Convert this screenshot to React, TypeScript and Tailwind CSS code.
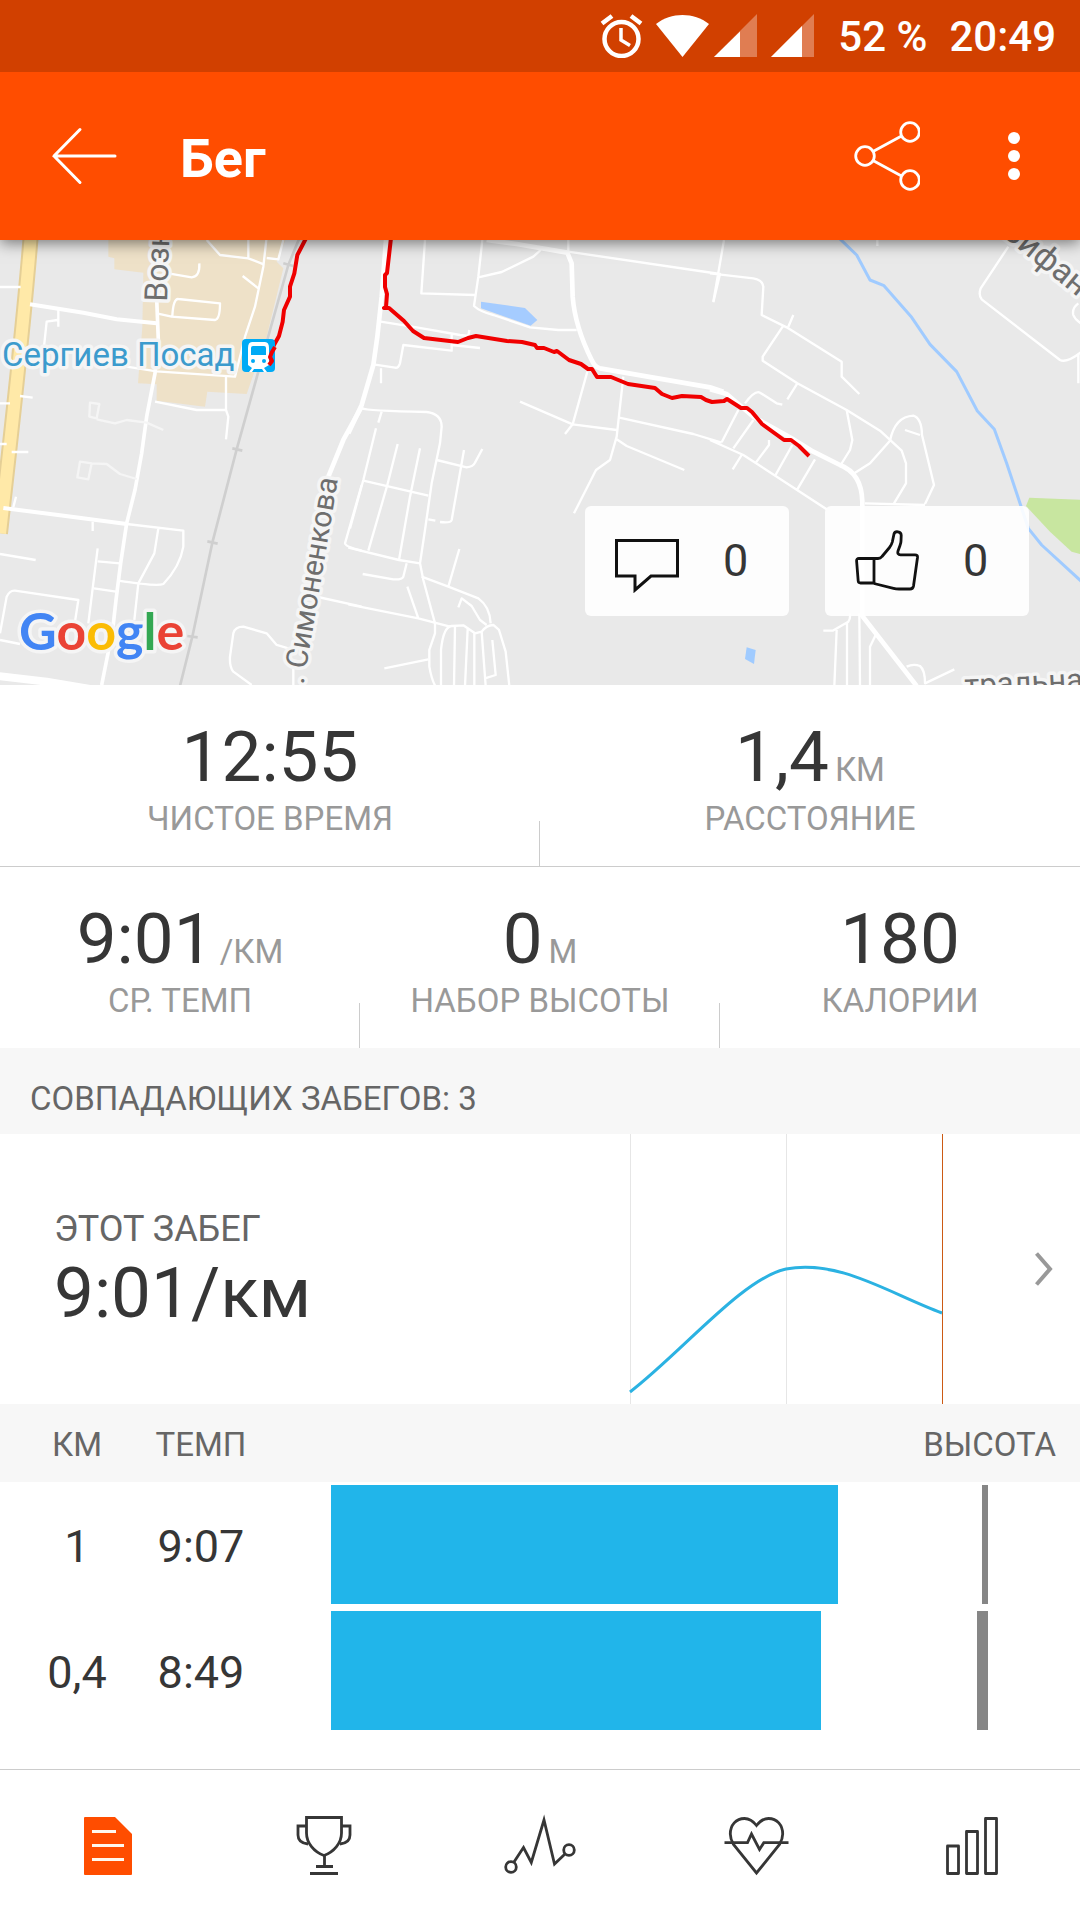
import React from "react";

type StatProps = { value: string; unit?: string; label: string; last?: boolean };

function Stat({ value, unit, label, last }: StatProps) {
  return (
    <div className="relative flex flex-1 flex-col items-center pt-[30px] pb-[27px]">
      <div className="flex items-baseline gap-1.5">
        <span className="text-[71px] leading-[84px] text-[#363636]">{value}</span>
        {unit && <span className="text-[33px] leading-10 text-[#999]">{unit}</span>}
      </div>
      <span className="text-[33px] leading-10 text-[#999]">{label}</span>
      {!last && <span className="absolute right-0 bottom-0 h-[45px] w-px bg-[#ccc]" />}
    </div>
  );
}

function StatusBar() {
  return (
    <div className="relative z-20 flex h-[72px] items-center justify-end bg-[#d14000] pr-6 text-[42px] font-medium text-white">
      <svg width="44" height="44" viewBox="0 0 44 44" fill="none" stroke="#fff" className="mr-3" aria-hidden="true">
        <circle cx="21.5" cy="25" r="17" strokeWidth="4.5" />
        <path d="M2 9.500L12 2M41 9.500L31 2" strokeWidth="4.500" />
        <path d="M21 14V26L30 31.500" strokeWidth="3.500" />
      </svg>
      <svg width="53" height="44" viewBox="0 0 53 44" className="mr-[5px]" fill="#fff" aria-hidden="true">
        <path d="M0 10C15-2 38-2 53 10L26.500 43Z" />
      </svg>
      <svg width="43" height="44" viewBox="0 0 43 44" className="mr-[14px]" fill="#fff" aria-hidden="true">
        <path d="M0 43L43 0V43Z" opacity=".32" />
        <path d="M0 43L26 17.500V43Z" />
      </svg>
      <svg width="43" height="44" viewBox="0 0 43 44" className="mr-6" fill="#fff" aria-hidden="true">
        <path d="M0 43L43 0V43Z" opacity=".32" />
        <path d="M0 43L31 12V43Z" />
      </svg>
      <span className="mr-[22px]">52 %</span>
      <span>20:49</span>
    </div>
  );
}

function Header() {
  return (
    <header className="relative z-10 flex h-[168px] items-center bg-[#ff4d00] pr-[54px] pl-12 text-white shadow-[0_3px_14px_rgba(0,0,0,0.5)]">
      <button aria-label="Назад">
        <svg width="72" height="60" viewBox="0 0 72 60" fill="none" stroke="#fff" strokeWidth="3" strokeLinecap="round">
          <path d="M67 30H6M32 3.500L6 30L32 56.500" />
        </svg>
      </button>
      <h1 className="ml-[60px] flex-1 pt-1 text-[54px] font-bold">Бег</h1>
      <button aria-label="Поделиться">
        <svg width="72" height="72" viewBox="0 0 72 72" fill="none" stroke="#fff" strokeWidth="2.800">
          <circle cx="17" cy="36" r="9.300" />
          <circle cx="62" cy="12" r="9.300" />
          <circle cx="62" cy="60" r="9.300" />
          <path d="M25 31.500L53.500 16M25 40.500L53.500 56" />
        </svg>
      </button>
      <button aria-label="Ещё" className="ml-[82px]">
        <svg width="24" height="60" viewBox="0 0 24 60" fill="#fff">
          <circle cx="12" cy="12" r="6" />
          <circle cx="12" cy="30" r="6" />
          <circle cx="12" cy="48" r="6" />
        </svg>
      </button>
    </header>
  );
}

const halo = { stroke: "#f5f5f5", strokeWidth: 7, strokeLinejoin: "round" as const, paintOrder: "stroke" };

function RouteMap() {
  return (
    <svg
      viewBox="0 0 1080 445"
      preserveAspectRatio="xMidYMid slice"
      className="block h-[445px] w-full bg-[#e9e9e9]"
      fontFamily="Roboto, sans-serif"
      fill="none"
      strokeLinejoin="round"
    >
      {/* western sheet: town centre and railway */}
      <g transform="translate(0 -10) scale(.33333)">
        <path
          d="M325 20V80L343 85V118L430 128L427 290L414 460L470 463L470 512L615 530L622 485L740 492L765 420L800 320L850 115L830 95L860 20Z"
          fill="#eee1c8"
        />
        <path d="M92 20C70 300 30 640 0 910" stroke="#e5cf96" strokeWidth="48" />
        <path d="M92 20C70 300 30 640 0 910" stroke="#ffe9a8" strokeWidth="36" />
        <g stroke="#fff" strokeWidth="12">
          <path d="M90 223L250 248L350 268L470 280M10 834L180 856L380 882" />
          <path d="M470 205L475 330L465 430L440 560L425 670L405 780L380 880L362 1000L348 1110L338 1200L305 1365" strokeWidth="11" />
          <path d="M1085 530L1030 630L985 740" strokeWidth="14" />
          <path d="M-5 1338L140 1355L300 1382" strokeWidth="24" />
        </g>
        <g stroke="#fff" strokeWidth="7">
          <path d="M0 171H62M0 520H30M60 498L98 503M35 666H85M0 642H20" />
          <path d="M800 20L790 110L765 230L735 320L705 440L470 424L380 410M620 30L660 75L745 85L793 104M745 30V85M800 84L835 88L850 30M728 138L775 175" />
          <path d="M505 130L575 142Q600 140 598 100M470 250L515 260L645 270Q660 268 660 220L535 207Q520 205 517 258" />
          <path d="M175 240V290M172 270L140 275L132 350" />
          <path d="M465 515L590 540H678V440M678 540L685 560L678 628" />
          <path d="M270 518L298 522L290 565L268 560ZM290 568L345 580L380 570L440 578L490 600M240 695L275 700L265 748L232 742ZM275 700L320 702L360 732L410 747" stroke="#f5f5f5" />
          <path d="M0 972L107 990M380 882L550 902V950Q540 1010 490 1062Q470 1070 355 1052M475 895L463 970L415 1060L403 1170M278 875V903M293 955L265 1180M293 994L360 1000M282 1075L348 1085" />
          <path d="M0 1210L20 1100Q30 1080 45 1082L235 1110L225 1175M0 1230L60 1242" />
          <path d="M1085 765L1035 940Q1035 950 1085 962M940 1098L1085 1130M865 1255L830 1245L800 1210L730 1190Q705 1190 700 1210L690 1280Q688 1310 700 1325L755 1365M880 1300V1370" />
          <path d="M48 800L40 832" />
        </g>
        <g stroke="#cfcfcf" strokeWidth="8">
          <path d="M900 20L865 105L775 425L710 658L637 938L577 1220L540 1368" />
          <path d="M850 100L880 108M697 655L727 662M622 934L653 941M562 1218L593 1222" />
        </g>
        <path d="M918 25L892 75L883 130L870 170V200L852 240L848 275L837 318L822 345L812 370L818 385L808 402" stroke="#f00000" strokeWidth="12" />
      </g>

      {/* central sheet */}
      <g transform="translate(350 -10) scale(.33333)">
        <g stroke="#fff" strokeWidth="14">
          <path d="M108 30L95 200L82 320L70 405L35 525L-5 610" />
          <path d="M410 30L500 42L652 68L665 100L668 200Q675 290 725 390Q735 412 750 415L1080 472L1120 485" />
        </g>
        <g stroke="#fff" strokeWidth="7">
          <path d="M225 30L214 190L375 195M397 30L385 140L372 228Q390 245 430 255L540 292L625 300H680M385 142L455 126L550 80L572 60M655 30V65L1110 132L1090 217" />
          <path d="M92 275L200 292L330 315L355 318L358 300M305 310V362L160 345L150 400Q145 415 135 413L70 403M93 415V460M305 345L390 354" />
          <path d="M510 515L668 583L800 600M645 612L668 583L712 425M820 440L800 620L780 690L738 720L672 850M808 563L1030 612L1115 638M800 628L830 648L1003 720" />
          <path d="M35 535Q50 543 230 546Q275 552 275 590L270 640L245 760L225 900L210 1000L220 1050L255 1180V1210L238 1260V1310Q245 1350 256 1368" />
          <path d="M95 545L85 578M78 595L40 750L0 895M143 642L112 765L55 962M210 655L180 800L147 990M40 752L235 797M260 690L350 712Q370 710 375 698L397 657M342 660L305 870Q302 880 270 876M235 868L256 872" />
          <path d="M-5 953L147 990L210 1000M170 1000L160 1040Q155 1050 130 1048L38 1032M-5 1123L205 1165L300 1190M172 1070L205 1165M215 1040L295 1070L385 1105Q420 1130 422 1180M328 957L295 1070M325 1132L335 1105L365 1128L390 1170L410 1185" />
          <path d="M103 1315L235 1288M273 1368V1260Q280 1190 305 1188L340 1186L375 1210L395 1205Q410 1185 430 1185L447 1200L467 1265L478 1368M315 1188L312 1368M353 1197L345 1368M373 1210V1368M395 1205L407 1368M427 1230L437 1335L405 1345" />
        </g>
        <path d="M393 215L525 234L562 270L542 287L393 235Z" fill="#a5ccff" />
      </g>

      {/* eastern sheet: river and park */}
      <g transform="translate(710 -10) scale(.33333)">
        <g stroke="#fff" strokeWidth="14">
          <path d="M0 478L50 492L130 560L245 625L310 665L390 705Q455 730 457 815V1158L620 1368" />
        </g>
        <g stroke="#fff" strokeWidth="7">
          <path d="M0 130L130 145Q158 150 160 170L155 255L230 292L395 395V440L448 492M42 30L10 215M250 255L235 290M218 290L158 380V392L262 460L410 540L510 602L575 662L588 700V760L552 820M262 460L232 508M85 540L35 637M105 520Q135 480 150 488L200 520L217 524" />
          <path d="M0 630L100 675L350 838M130 570L70 655M177 630V645L138 697M95 675L68 718M247 645L195 738M315 688L262 778M410 540L427 630L420 660L392 705M433 730L480 700L540 632Q555 560 610 557Q635 565 636 615L672 765L645 822M585 600L630 615M465 820L645 825" />
          <path d="M895 50L812 175Q805 195 815 208L1050 390Q1070 400 1115 365M1105 370V460M1105 220Q1085 235 1090 255Q1095 270 1120 285M502 30V48" />
          <path d="M340 1202H368L415 1175Q422 1165 420 1150M380 1200L373 1368M411 1180V1368M448 1150L450 1368M497 1215L480 1250V1368M590 1310Q610 1300 630 1308Q645 1320 645 1360L733 1318" />
        </g>
        <path d="M388 25L440 75L480 150L522 167L605 262L660 343L740 425L802 543L853 598L890 700L935 835L955 895L995 945L1115 1055" stroke="#a0cbff" strokeWidth="9" />
        <path d="M110 1252L137 1260L132 1302L105 1287Z" fill="#a0cbff" />
        <path d="M958 803L1120 810V975L1085 965L1020 905L948 828Z" fill="#c8e6a0" />
      </g>

      <path
        d="M391 -2L387 33L385 35V47L387 54L386 67L384 68L389 68L404 81L413 91L424 98L458 102L468 98L476 96L507 101L522 102L535 105L537 108H544L554 112L557 111L569 120L581 124L588 129H592L597 137H611L628 144L655 148L662 154L672 158L682 156L701 157L706 160L712 162L724 161L727 159L741 168H747L752 172L762 184L784 200H791L799 206L809 216"
        stroke="#f00000"
        strokeWidth="4"
      />

      <g>
        <rect x="242" y="99" width="33" height="33" rx="4" fill="#00aaf5" />
        <path
          d="M252 102H265Q269 102 269 108V125L264 128L267 132H264L262 129H254L252 132H249L252 128L248 125V108Q248 102 252 102Z"
          fill="#fff"
        />
        <path d="M251 108Q251 106 253 106H264Q266 106 266 108V115H251Z" fill="#00aaf5" />
        <circle cx="253" cy="121" r="2" fill="#00aaf5" />
        <circle cx="264" cy="121" r="2" fill="#00aaf5" />
        <path d="M275 107L272 112L270 117L272 121L269 125" stroke="#f00000" strokeWidth="4" />
      </g>

      <g fontSize="30" fill="#6e6e6e">
        <text x="2" y="126" fontSize="33" fill="#3c9bcd" {...halo}>Сергиев Посад</text>
        <text transform="translate(167 62) rotate(-88)" fontSize="32" {...halo}>Возн</text>
        <text transform="translate(338 239) rotate(-80.500)" textAnchor="end" {...halo}>. Симоненкова</text>
        <text transform="translate(1000 -6) rotate(39)" fontSize="33" {...halo}>Вифан</text>
        <text transform="translate(965 456) rotate(-3)" fontSize="31" {...halo}>тральна</text>
      </g>

      <text x="19" y="410" fontSize="52" fontFamily="Lato, sans-serif" fontWeight="700" {...halo}>
        <tspan fill="#4285f4">G</tspan>
        <tspan fill="#ea4335">o</tspan>
        <tspan fill="#fbbc05">o</tspan>
        <tspan fill="#4285f4">g</tspan>
        <tspan fill="#34a853">l</tspan>
        <tspan fill="#ea4335">e</tspan>
      </text>
    </svg>
  );
}

const cardClass = "flex h-[110px] w-[204px] items-center rounded-md bg-white/90 pl-[30px] text-[45px] text-[#363636]";

function MapSection() {
  return (
    <section className="relative">
      <RouteMap />
      <div className="absolute right-[51px] bottom-[69px] flex gap-9">
        <button className={cardClass} aria-label="Комментарии: 0">
          <svg width="64" height="64" viewBox="0 0 64 64" fill="none" stroke="#111" strokeWidth="3">
            <path d="M1.500 11.500H62.500V47H36L20 61V47H1.500Z" />
          </svg>
          <span className="ml-11">0</span>
        </button>
        <button className={cardClass} aria-label="Нравится: 0">
          <svg width="64" height="64" viewBox="0 0 64 64" fill="none" stroke="#111" strokeWidth="2.800" strokeLinejoin="round">
            <path d="M19 29.500H4Q1.400 29.500 1.600 32L3.200 52Q3.400 54 5.500 54H19Z" />
            <path d="M19 29.500H23Q25.500 29.500 27 27.500L34.500 18.500Q36.500 16 37.300 13L39 5Q39.800 2.300 43 2.800Q46.300 3.300 46.200 6.500L46 12Q46 14 45 16.500L43 22Q42 25.800 45.500 25.800H60Q62.800 25.800 62.500 28.500L58.500 57Q58 60 55 60H44Q41 60 38.500 59.300L19 54.500" />
          </svg>
          <span className="ml-11">0</span>
        </button>
      </div>
    </section>
  );
}

const splits = [
  { km: "1", pace: "9:07", seconds: 547, climb: "w-1.5" },
  { km: "0,4", pace: "8:49", seconds: 529, climb: "w-[11px]" },
];
const SLOWEST = 614;

function Splits() {
  return (
    <table className="w-full table-fixed border-collapse">
      <colgroup>
        <col className="w-[154px]" />
        <col className="w-[94px]" />
        <col />
        <col className="w-[180px]" />
      </colgroup>
      <thead className="h-[78px] bg-[#f7f7f7] text-[33px] leading-10 text-[#666]">
        <tr>
          <th className="pt-1 font-normal" scope="col">КМ</th>
          <th className="pt-1 font-normal" scope="col">ТЕМП</th>
          <td />
          <th className="pt-1 pr-6 text-right font-normal" scope="col">ВЫСОТА</th>
        </tr>
      </thead>
      <tbody>
        {splits.map((s) => (
          <tr key={s.km} className="h-[126px] text-center text-[45px] text-[#363636]">
            <td className="pt-[3px]">{s.km}</td>
            <td className="pt-[3px]">{s.pace}</td>
            <td className="pt-[3px] pb-1 pl-[83px]">
              <div className="h-[119px] bg-[#21b5ea]" style={{ width: `${(s.seconds / SLOWEST) * 100}%` }} />
            </td>
            <td className="pt-[3px] pr-[92px] pb-1">
              <div className={`ml-auto h-[119px] bg-[#868686] ${s.climb}`} />
            </td>
          </tr>
        ))}
      </tbody>
    </table>
  );
}

function MatchedRuns() {
  return (
    <section>
      <h2 className="bg-[#f7f7f7] px-[30px] pt-[31px] pb-[15px] text-[33px] leading-10 text-[#666]">
        СОВПАДАЮЩИХ ЗАБЕГОВ: 3
      </h2>
      <a href="#matched" className="flex h-[270px]">
        <div className="flex-1 pt-[73px] pl-[54px]">
          <div className="text-[36px] leading-[44px] text-[#666]">ЭТОТ ЗАБЕГ</div>
          <div className="text-[71px] leading-[84px] text-[#363636]">9:01/км</div>
        </div>
        <svg width="316" height="270" viewBox="0 0 316 270" fill="none" aria-hidden="true">
          <path d="M2.500 0V270M158.500 0V270" stroke="#e6e6e6" />
          <path d="M314.500 0V270" stroke="#cc5a14" />
          <path d="M2 258C55 217 115 144 158 135C212 125 262 160 314 179" stroke="#2bb2e2" strokeWidth="3" />
        </svg>
        <div className="flex w-[136px] items-center justify-end pr-[27px]">
          <svg width="18" height="34" viewBox="0 0 18 34" fill="none" stroke="#999" strokeWidth="4" aria-hidden="true">
            <path d="M1.500 1.500L15 17L1.500 32.500" />
          </svg>
        </div>
      </a>
    </section>
  );
}

function BottomNav() {
  const item = "flex flex-1 items-center justify-center";
  const line = { width: 72, height: 72, viewBox: "0 0 72 72", fill: "none", stroke: "#363636", strokeWidth: 2.8 };
  return (
    <nav className="flex h-[151px] border-t border-[#ccc]">
      <button className={item} aria-label="Обзор" aria-current="page">
        <svg width="72" height="72" viewBox="0 0 72 72">
          <path d="M13 8H43L60 25V65Q60 66 59 66H13Q12 66 12 65V9Q12 8 13 8Z" fill="#ff4d00" />
          <path d="M20 22.500H44M20 36.500H52M20 50.500H52" stroke="#fff8ee" strokeWidth="3" />
        </svg>
      </button>
      <button className={item} aria-label="Результаты">
        <svg {...line}>
          <path d="M18.500 8.500H53.500V24C53.500 34 46 43 36 46.500C26 43 18.500 34 18.500 24Z" />
          <path d="M18.500 17H10V26Q10 34 20 35M53.500 17H62V26Q62 34 52 35M36.500 46V57.500M28 57.500H45M22 64.500H50" />
        </svg>
      </button>
      <button className={item} aria-label="Анализ">
        <svg {...line}>
          <circle cx="7" cy="58" r="5.300" />
          <circle cx="65" cy="41" r="5.300" />
          <path d="M10 53L19.500 38.500L27.300 53.500L40 11L50.500 55L61 45" />
        </svg>
      </button>
      <button className={item} aria-label="Пульс">
        <svg {...line}>
          <path d="M36.500 16.500C33 12 29.500 9.500 24.500 9.500C16 9.500 10.300 16 10.300 25C10.300 29 11.500 32 13.500 35.500L36.500 64L59.500 35.500C61.500 32 62.700 29 62.700 25C62.700 16 57 9.500 48.500 9.500C43.500 9.500 40 12 36.500 16.500Z" />
          <path d="M4.500 33.700H27.500L31.500 25L39.500 40.500L43.800 33.700H68.500" />
        </svg>
      </button>
      <button className={item} aria-label="Статистика">
        <svg {...line} strokeLinejoin="round">
          <path d="M11.500 37H22.500V64.500H11.500ZM30.500 22.500H41.500V64.500H30.500ZM49.500 9.500H60.500V64.500H49.500Z" />
        </svg>
      </button>
    </nav>
  );
}

export default function App() {
  return (
    <div className="flex min-h-screen flex-col bg-white font-[Roboto,sans-serif]">
      <StatusBar />
      <Header />
      <main className="flex-1">
        <MapSection />
        <section className="flex border-b border-[#ccc]">
          <Stat value="12:55" label="ЧИСТОЕ ВРЕМЯ" />
          <Stat value="1,4" unit="КМ" label="РАССТОЯНИЕ" last />
        </section>
        <section className="flex">
          <Stat value="9:01" unit="/КМ" label="СР. ТЕМП" />
          <Stat value="0" unit="М" label="НАБОР ВЫСОТЫ" />
          <Stat value="180" label="КАЛОРИИ" last />
        </section>
        <MatchedRuns />
        <Splits />
      </main>
      <BottomNav />
    </div>
  );
}
